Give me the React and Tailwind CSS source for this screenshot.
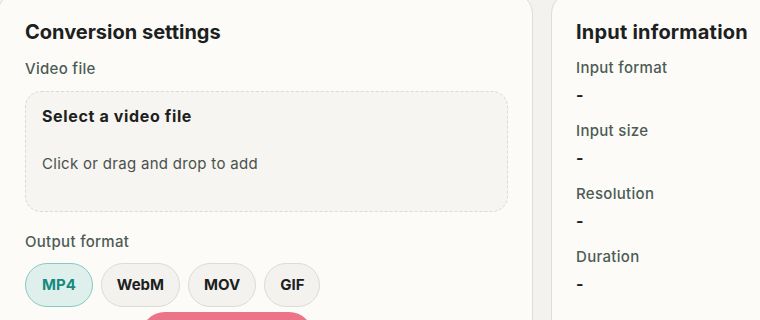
import React from "react";

const formats = ["MP4", "WebM", "MOV", "GIF"];

const infoRows = ["Input format", "Input size", "Resolution", "Duration"];

export default function App() {
  return (
    <div
      className="w-[760px] h-[320px] overflow-hidden bg-[#f3f2ee] text-[#1c211e]"
      style={{ fontFamily: "Inter, 'Noto Sans', sans-serif" }}
    >
      <div className="flex gap-[18px] -mt-[8px] -ml-[3px]">
        {/* Conversion settings card */}
        <section className="w-[536px] shrink-0 h-[360px] rounded-[22px] border border-[#dfddd7] bg-[#fcfbf8] pt-[25px] pl-[27px] pr-[24px]">
          <h2 className="text-[20px] leading-[28px] font-bold">Conversion settings</h2>
          <p className="mt-[13px] text-[15px] leading-[20px] font-medium tracking-[0.02em] text-[#4d5b55]">Video file</p>

          <div className="mt-[12px] h-[121px] rounded-[16px] border border-dashed border-[#dcdad4] bg-[#f6f5f1] px-[16px] pt-[12px]">
            <p className="text-[16px] leading-[24px] font-bold tracking-[0.04em]">Select a video file</p>
            <p className="mt-[26px] text-[15px] leading-[20px] tracking-[0.02em] text-[#4a504c]">Click or drag and drop to add</p>
          </div>

          <p className="mt-[20px] text-[15px] leading-[20px] font-medium tracking-[0.02em] text-[#4d5b55]">Output format</p>

          <div className="mt-[11px] flex gap-[8px]">
            {formats.map((f) =>
              f === "MP4" ? (
                <button
                  key={f}
                  className="h-[44px] px-4 rounded-full border border-[#86cbc3] bg-[#dff0ec] text-[15px] font-bold text-[#17897f]"
                >
                  {f}
                </button>
              ) : (
                <button
                  key={f}
                  className="h-[44px] px-[15px] rounded-full border border-[#dddbd5] bg-[#f3f2ee] text-[15px] font-bold text-[#1c211e]"
                >
                  {f}
                </button>
              )
            )}
          </div>

          <div className="mt-[5px] ml-[116px] w-[172px] h-[48px] rounded-full bg-[#ec7489]" />
        </section>

        {/* Input information card */}
        <section className="w-[260px] shrink-0 h-[360px] rounded-[22px] border border-[#dfddd7] bg-[#fcfbf8] pt-[25px] pl-[24px]">
          <h2 className="text-[20px] leading-[28px] font-bold tracking-[0.01em] whitespace-nowrap">Input information</h2>
          <div className="mt-[12px] flex flex-col gap-[14px]">
            {infoRows.map((label) => (
              <div key={label}>
                <p className="text-[15px] leading-[20px] font-medium tracking-[0.02em] text-[#4d5b55]">{label}</p>
                <p className="mt-[5px] text-[16px] leading-[24px] font-bold">-</p>
              </div>
            ))}
          </div>
        </section>
      </div>
    </div>
  );
}
